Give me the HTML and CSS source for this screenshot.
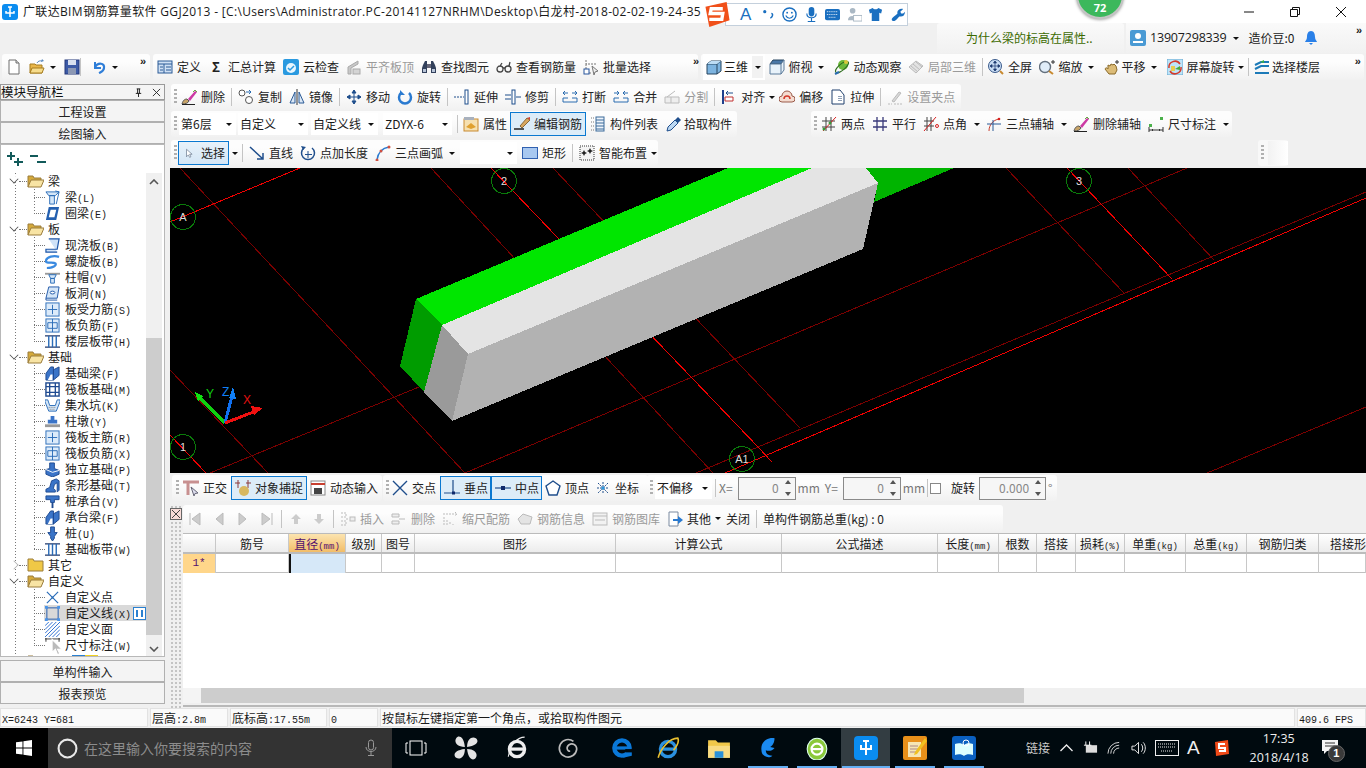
FILE: index.html
```html
<!DOCTYPE html>
<html lang="zh-CN">
<head>
<meta charset="utf-8">
<title>广联达BIM钢筋算量软件 GGJ2013</title>
<link rel="stylesheet" href="styles.css">
</head>
<body>
<svg class="defs" xmlns="http://www.w3.org/2000/svg">
<symbol id="new" viewBox="0 0 16 16"><path d="M3 1h7l3 3v11H3z" fill="#fff" stroke="#6f6f6f"/><path d="M10 1v3h3" fill="#ddd" stroke="#6f6f6f"/></symbol>
<symbol id="open" viewBox="0 0 16 16"><path d="M1 5h5l1 1h6v8H1z" fill="#e8b64a" stroke="#a67c20"/><path d="M3 9h12l-2 5H1z" fill="#f6dc8c" stroke="#a67c20"/><path d="M8 4c1-2 3-2.500 5-2" fill="none" stroke="#5a8ac0"/><path d="M13 0l2 2-3 1z" fill="#5a8ac0"/></symbol>
<symbol id="save" viewBox="0 0 16 16"><rect x="1" y="1" width="14" height="14" fill="#3c5aa6" stroke="#24387a"/><rect x="4" y="1" width="8" height="5" fill="#d8e0f0"/><rect x="4" y="9" width="8" height="6" fill="#8c98b4"/></symbol>
<symbol id="undo" viewBox="0 0 16 16"><path d="M4 3v6h6" fill="none" stroke="#2f7ed8" stroke-width="2"/><path d="M4 8c3-5 10-4 9 1 0 3-3 4-5 5" fill="none" stroke="#2f7ed8" stroke-width="2.200"/></symbol>
<symbol id="def" viewBox="0 0 16 16"><rect x="1" y="2" width="14" height="12" fill="#cfe0f4" stroke="#2a5a96"/><path d="M1 5h14M7 5v9M3 8h3M3 11h3M9 8h5M9 11h5" stroke="#2a5a96"/></symbol>
<symbol id="cloud" viewBox="0 0 16 16"><rect x="0" y="0" width="16" height="16" rx="2" fill="#2a9ae0"/><circle cx="8" cy="9" r="5" fill="#e8f6fe"/><path d="M5 9l2 2 4-4" fill="none" stroke="#2a9ae0" stroke-width="1.500"/></symbol>
<symbol id="flat" viewBox="0 0 16 16"><path d="M2 8l10-6v3L5 9v6H2z" fill="#c8c8c8" stroke="#aaa"/><rect x="7" y="10" width="7" height="5" fill="#d4d4d4" stroke="#aaa"/></symbol>
<symbol id="find" viewBox="0 0 16 16"><path d="M2 6l2-4h2v12H1V9zM14 6l-2-4h-2v12h5V9z" fill="#33415c"/><rect x="6" y="5" width="4" height="4" fill="#667"/><rect x="2" y="10" width="3" height="3" fill="#b8c4d8"/><rect x="11" y="10" width="3" height="3" fill="#b8c4d8"/></symbol>
<symbol id="glass" viewBox="0 0 16 16"><path d="M1 10a3 3 0 1 0 6 0 3 3 0 1 0-6 0M9 10a3 3 0 1 0 6 0 3 3 0 1 0-6 0M7 9h2M4 7l2-3M13 7l1-4" fill="none" stroke="#444" stroke-width="1.300"/></symbol>
<symbol id="batch" viewBox="0 0 16 16"><path d="M3 1v4h11M3 5v9h6" fill="none" stroke="#777" stroke-dasharray="2 1"/><rect x="1" y="10" width="5" height="5" fill="#fff" stroke="#27559c"/><path d="M9 7l6 5-3 1-1 3z" fill="#eee" stroke="#777"/></symbol>
<symbol id="cube" viewBox="0 0 16 16"><path d="M1 5l4-3h10v10l-4 3H1z" fill="#7db4e0" stroke="#27445f"/><path d="M1 5h10v10M11 5l4-3" fill="none" stroke="#27445f"/><path d="M1 5l4-3h10l-4 3z" fill="#bcdcf4"/></symbol>
<symbol id="top" viewBox="0 0 16 16"><path d="M1 5l3-4h11l-3 4z" fill="#4a78a8" stroke="#27445f"/><path d="M1 5h11v10H1zM12 5l3-4v10l-3 4" fill="#e8f2fa" stroke="#5a7a9a"/></symbol>
<symbol id="orbit" viewBox="0 0 16 16"><circle cx="9" cy="6" r="5" fill="#6cb83a"/><ellipse cx="8" cy="8" rx="8" ry="3" fill="none" stroke="#2d6d1e" transform="rotate(-40 8 8)"/><circle cx="12" cy="3" r="2" fill="#d8c838"/><path d="M1 15l4-2" stroke="#2a6cb0" stroke-width="2"/></symbol>
<symbol id="local" viewBox="0 0 16 16"><path d="M1 8l7-6 7 5-7 7z" fill="#e2e2e2" stroke="#bbb"/><path d="M5 5l7 6M8 3l6 5M3 7l7 6" stroke="#bbb"/></symbol>
<symbol id="full" viewBox="0 0 16 16"><circle cx="7" cy="7" r="6.500" fill="#c8dcf4" stroke="#3a5a8a"/><path d="M7 2v10M2 7h10M7 2L5.500 4h3zM7 12l-1.500-2h3zM2 7l2-1.500v3zM12 7l-2-1.500v3z" stroke="#1c3a70" fill="#1c3a70" stroke-width=".7"/><path d="M12 12l3 3" stroke="#c88a30" stroke-width="2"/></symbol>
<symbol id="zoom" viewBox="0 0 16 16"><circle cx="6" cy="8" r="5.500" fill="#e0ecf8" stroke="#64707e" stroke-width="1.400"/><path d="M10 12l4 3" stroke="#c88a30" stroke-width="2"/><path d="M12 3h4M14 1v4" stroke="#333"/></symbol>
<symbol id="pan" viewBox="0 0 16 16"><path d="M1 10c1-2 2-1 3 0V6l2 1 1-2 2 1 1-1 2 2 1 4-2 4H5z" fill="#dcbc78" stroke="#8a6a2a"/><path d="M11 3h4M13 1v4" stroke="#333"/></symbol>
<symbol id="rot" viewBox="0 0 16 16"><rect x="0" y="0" width="16" height="16" rx="1" fill="#bde4f8" stroke="#69a8d0"/><path d="M2 9a6 6 0 0 1 11-4M14 8a6 6 0 0 1-11 4" fill="none" stroke="#d43a2a" stroke-width="1.500"/><rect x="4" y="7" width="4" height="5" fill="#e8cc50"/><path d="M8 10l5-3v4z" fill="#4aa83a"/></symbol>
<symbol id="floor" viewBox="0 0 16 16"><path d="M1 6l6-3h8M1 10l6-3h8M1 14h14" fill="none" stroke="#1c7ab8" stroke-width="2"/><path d="M6 3l4-2v3z" fill="#3cae4a"/></symbol>
<symbol id="del" viewBox="0 0 16 16"><path d="M1 15c1-4 3-5 5-5l2 2c-1 2-3 3-7 3z" fill="#c8a468" stroke="#555"/><path d="M7 10l7-8 2 1-7 9z" fill="#cc3aa4"/><path d="M1 15.500h13" stroke="#222"/><path d="M12 3l2-2 2 2" fill="none" stroke="#6a4"/></symbol>
<symbol id="copy" viewBox="0 0 16 16"><circle cx="4" cy="4" r="3" fill="#fff" stroke="#555"/><circle cx="11" cy="11" r="3.500" fill="#fff" stroke="#555"/><path d="M8 3h5l-2-2M13 3l-2 2" fill="none" stroke="#2a6cb0"/></symbol>
<symbol id="mirror" viewBox="0 0 16 16"><path d="M8 0v16" stroke="#333"/><path d="M6 3v11H1zM10 3v11h5z" fill="#dbe8f6" stroke="#2a5a96"/></symbol>
<symbol id="move" viewBox="0 0 16 16"><path d="M8 1v14M1 8h14M8 1L6 4h4zM8 15l-2-3h4zM1 8l3-2v4zM15 8l-3-2v4z" stroke="#1f4e8c" fill="#1f4e8c"/></symbol>
<symbol id="rotate" viewBox="0 0 16 16"><path d="M4 4a6 6 0 1 0 8 0" fill="none" stroke="#2a7ad0" stroke-width="2.500"/><path d="M3 1v5h5z" fill="#2a7ad0"/></symbol>
<symbol id="extend" viewBox="0 0 16 16"><path d="M0 8h10" stroke="#1f4e8c" stroke-dasharray="2 1"/><rect x="11" y="1" width="3" height="14" fill="#fff" stroke="#1f4e8c"/></symbol>
<symbol id="trim" viewBox="0 0 16 16"><path d="M0 6h6M0 10h6M11 8h5" stroke="#1f4e8c"/><rect x="7" y="1" width="3" height="14" fill="#fff" stroke="#1f4e8c"/></symbol>
<symbol id="break" viewBox="0 0 16 16"><path d="M1 13V9h5M15 13V9h-5M1 13h14M2 4h4M14 4h-4M3 2L1 4l2 2M13 2l2 2-2 2" fill="none" stroke="#2a6cb0"/></symbol>
<symbol id="merge" viewBox="0 0 16 16"><path d="M1 13V9h5M15 13V9h-5M1 13h14M1 4h5M15 4h-5M4 2l2 2-2 2M12 2l-2 2 2 2" fill="none" stroke="#2a6cb0"/></symbol>
<symbol id="split" viewBox="0 0 16 16"><path d="M1 8h14v6H1zM7 8v6M3 8l8-6" fill="#eee" stroke="#bbb"/></symbol>
<symbol id="align" viewBox="0 0 16 16"><path d="M2 1v14" stroke="#1f3f8c" stroke-width="2"/><path d="M4 12h8V8H4z" fill="#fff" stroke="#c03030"/><path d="M12 4H5M7 2L5 4l2 2" fill="none" stroke="#1f4e8c"/></symbol>
<symbol id="offset" viewBox="0 0 16 16"><path d="M3 13a3 3 0 0 1 0-6 5 5 0 0 1 10 0 3 3 0 0 1 0 6z" fill="#f4dcd0" stroke="#9a5a4a"/><path d="M5 10a3 3 0 0 1 6 0" fill="none" stroke="#d43a2a" stroke-width="1.500"/></symbol>
<symbol id="stretch" viewBox="0 0 16 16"><path d="M2 1h8l4 5v9H2z" fill="#fff" stroke="#1f3f6c"/><path d="M9 7v6M11 7v6" stroke="#1f3f6c" stroke-dasharray="1 1"/></symbol>
<symbol id="grip" viewBox="0 0 16 16"><path d="M1 15h4M7 15h8" stroke="#bbb" stroke-dasharray="2 1"/><path d="M5 12l7-9 2 1-7 9z" fill="#d8d8d8" stroke="#bbb"/></symbol>
<symbol id="prop" viewBox="0 0 16 16"><rect x="1" y="3" width="14" height="12" fill="#f6e0b0" stroke="#c88a30"/><rect x="1" y="1" width="10" height="3" fill="#a8b0bc"/><path d="M3 11l5-4 5 4-5 2z" fill="#e0a030"/></symbol>
<symbol id="edit" viewBox="0 0 16 16"><path d="M0 13h10" stroke="#222" stroke-width="1.500"/><path d="M6 10l7-8 3 2-8 8z" fill="#d8a860" stroke="#8a6a3a"/><path d="M13 2l3 2 0-3z" fill="#d04030"/></symbol>
<symbol id="list" viewBox="0 0 16 16"><rect x="6" y="1" width="8" height="14" fill="#eef4fb" stroke="#3a6a9a"/><path d="M6 4h8M6 7h8M6 10h8M6 13h8" stroke="#3a6a9a"/><path d="M1 2h3M1 6h3M1 10h3M1 14h3" stroke="#777" stroke-dasharray="1 1"/></symbol>
<symbol id="pick" viewBox="0 0 16 16"><path d="M1 15l1-4 7-7 3 3-7 7z" fill="#bcd8f2" stroke="#1f4e8c"/><path d="M9 4l3-3 3 3-3 3z" fill="#1f4e8c"/></symbol>
<symbol id="two" viewBox="0 0 16 16"><path d="M1 5h13M1 11h13M5 1v14M10 1v14" stroke="#444"/><path d="M2 15L15 1" stroke="#d82020"/><circle cx="3" cy="13" r="1.500" fill="#3a9a3a"/><circle cx="9" cy="7" r="1.500" fill="#3a9a3a"/></symbol>
<symbol id="para" viewBox="0 0 16 16"><path d="M1 5h14M1 11h14M5 1v14M11 1v14" stroke="#3a3a7a" stroke-width="1.300"/></symbol>
<symbol id="ang" viewBox="0 0 16 16"><path d="M1 5h10M1 10h10M4 1v14M8 1v14" stroke="#444"/><path d="M1 15L13 1" stroke="#d82020"/><circle cx="14" cy="10" r="1.500" fill="none" stroke="#d82020"/></symbol>
<symbol id="arc3" viewBox="0 0 16 16"><path d="M3 15c0-6 4-11 10-12" fill="none" stroke="#c84030"/><path d="M1 8h14M7 4v11" stroke="#2a5a96"/><circle cx="13" cy="3" r="1.300" fill="#d82020"/></symbol>
<symbol id="dim" viewBox="0 0 16 16"><path d="M1 14h14M1 11v5M15 11v5M5 13l-1 1 1 1M11 13l1 1-1 1" fill="none" stroke="#333"/><rect x="1" y="8" width="3" height="3" fill="#4ab04a"/><rect x="12" y="1" width="3" height="3" fill="#4ab04a"/></symbol>
<symbol id="arrow" viewBox="0 0 16 16"><path d="M4 2v12l3-3 2 4 2-1-2-4h4z" fill="#fff" stroke="#5a6a80"/></symbol>
<symbol id="lineic" viewBox="0 0 16 16"><path d="M1 2l13 12M14 8v6H8" fill="none" stroke="#1f4e8c" stroke-width="1.500"/></symbol>
<symbol id="ptlen" viewBox="0 0 16 16"><path d="M4 3a6.500 6.500 0 1 0 8 0" fill="none" stroke="#1f4e8c" stroke-width="1.500"/><path d="M1 1l5 1-3 3z" fill="#1f4e8c"/><path d="M8 6v7M5 9.500h7" stroke="#1f4e8c"/></symbol>
<symbol id="arc" viewBox="0 0 16 16"><path d="M2 15C3 8 7 3 14 2" fill="none" stroke="#2a7ad0" stroke-width="1.500"/><circle cx="2" cy="15" r="1.500" fill="#d05040"/><circle cx="6" cy="6" r="1.500" fill="#d05040"/><circle cx="14" cy="2" r="1.500" fill="#d05040"/></symbol>
<symbol id="rect" viewBox="0 0 16 16"><rect x="0.500" y="2.500" width="15" height="11" fill="#a8c8f0" stroke="#3060b0"/></symbol>
<symbol id="smart" viewBox="0 0 16 16"><rect x="1" y="1" width="14" height="14" fill="#f4f4f4" stroke="#333" stroke-dasharray="1 1"/><path d="M5 5l1 2 2 1-2 1-1 2-1-2-2-1 2-1zM11 3l1 2 2 1-2 1-1 2-1-2-2-1 2-1z" fill="#222"/></symbol>
<symbol id="ortho" viewBox="0 0 16 16"><path d="M0 2h16M5 2v13" stroke="#c89090" stroke-width="3"/><path d="M8 7l7 6-3 .5-1 2.500z" fill="#dde" stroke="#667"/></symbol>
<symbol id="snap" viewBox="0 0 16 16"><path d="M3 0v8M13 0v8M0 3h5M11 3h5" stroke="#8a3a3a"/><circle cx="9" cy="11" r="5" fill="#d8b860"/></symbol>
<symbol id="dyn" viewBox="0 0 16 16"><rect x="1" y="1" width="14" height="14" fill="#fff" stroke="#888"/><path d="M1 4h14" stroke="#c84030" stroke-width="2"/><rect x="4" y="8" width="8" height="6" fill="#444"/></symbol>
<symbol id="cross" viewBox="0 0 16 16"><path d="M1 1l14 14M15 1L1 15" stroke="#1f4e8c" stroke-width="1.400"/></symbol>
<symbol id="perp" viewBox="0 0 16 16"><path d="M9 0v13M0 13h16" stroke="#1f4e8c" stroke-width="1.200"/><rect x="8" y="11.500" width="3" height="3" fill="#102a6c"/></symbol>
<symbol id="mid" viewBox="0 0 16 16"><path d="M0 8h16" stroke="#1f4e8c" stroke-width="1.200"/><rect x="6" y="6" width="4" height="4" fill="#102a6c"/></symbol>
<symbol id="vert" viewBox="0 0 16 16"><path d="M8 1l7 5-3 9H4L1 6z" fill="#fff" stroke="#1f4e8c" stroke-width="1.400"/></symbol>
<symbol id="coord" viewBox="0 0 16 16"><path d="M3 3l10 10M13 3L3 13M2 8h12M8 2v12" stroke="#1f4e8c" stroke-dasharray="2 1"/><circle cx="8" cy="8" r="1.500" fill="#2a9ae0"/></symbol>
<symbol id="first" viewBox="0 0 16 16"><path d="M3 2v12M13 2L5 8l8 6z" fill="#ccc" stroke="#bbb"/></symbol>
<symbol id="prev" viewBox="0 0 16 16"><path d="M12 2L5 8l7 6z" fill="#ccc" stroke="#bbb"/></symbol>
<symbol id="next" viewBox="0 0 16 16"><path d="M4 2l7 6-7 6z" fill="#ccc" stroke="#bbb"/></symbol>
<symbol id="last" viewBox="0 0 16 16"><path d="M13 2v12M3 2l8 6-8 6z" fill="#ccc" stroke="#bbb"/></symbol>
<symbol id="up" viewBox="0 0 16 16"><path d="M8 3l5 5h-3v5H6V8H3z" fill="#ccc"/></symbol>
<symbol id="down" viewBox="0 0 16 16"><path d="M8 13l5-5h-3V3H6v5H3z" fill="#ccc"/></symbol>
<symbol id="ins" viewBox="0 0 16 16"><path d="M1 2h5v4H1M1 10h5v4H1M6 8h3" fill="none" stroke="#bbb" stroke-dasharray="2 1"/><rect x="10" y="6" width="5" height="4" fill="#eee" stroke="#bbb"/></symbol>
<symbol id="rem" viewBox="0 0 16 16"><path d="M1 3h7v3H1zM1 10h7v3H1zM8 8h6" fill="#eee" stroke="#bbb"/></symbol>
<symbol id="scale" viewBox="0 0 16 16"><path d="M1 3h13M13 1l2 2-2 2M2 6v8M5 9v5M8 11v3M11 13v1" fill="none" stroke="#bbb" stroke-dasharray="2 1"/></symbol>
<symbol id="info" viewBox="0 0 16 16"><path d="M1 8l5-5 9 3-2 7H4z" fill="#e4e4e4" stroke="#bbb"/></symbol>
<symbol id="lib" viewBox="0 0 16 16"><rect x="1" y="2" width="14" height="12" fill="#f2f2f2" stroke="#bbb"/><path d="M1 5h14M3 9h10" stroke="#bbb"/></symbol>
<symbol id="other" viewBox="0 0 16 16"><path d="M2 1h9v14H2z" fill="#fff" stroke="#7a8aa0"/><path d="M6 8h5V5l5 4-5 4v-3H6z" fill="#2a7ad0"/></symbol>
<symbol id="t-beam" viewBox="0 0 16 16"><path d="M1 2h14l-4 4H4zM5 6h5v9H5z" fill="#d4e6f8" stroke="#2a6cb8"/><path d="M11 1l4 1-3 13" fill="none" stroke="#2a6cb8"/></symbol>
<symbol id="t-ring" viewBox="0 0 16 16"><path d="M4 1h11l-3 14H1z" fill="#2460b0"/><path d="M6 4h6l-2 8H4z" fill="#fff"/></symbol>
<symbol id="t-slab" viewBox="0 0 16 16"><path d="M4 1h11l-2 11H1v3h12" fill="#cfe2f8" stroke="#1e56a8" stroke-width="1.300"/></symbol>
<symbol id="t-spiral" viewBox="0 0 16 16"><path d="M15 3C9 1 2 3 1 7s8 1 10 3-3 5-9 5" fill="none" stroke="#3a8ae0" stroke-width="2.400"/></symbol>
<symbol id="t-cap" viewBox="0 0 16 16"><path d="M0 3h16v2H0z" fill="#999"/><path d="M4 5h8l-2 4H6zM6 9h4v5H6z" fill="#d4e6f8" stroke="#2a6cb8"/></symbol>
<symbol id="t-hole" viewBox="0 0 16 16"><path d="M4 1h11l-2 12H1z" fill="#d4e6f8" stroke="#1e56a8"/><ellipse cx="8" cy="7" rx="2.500" ry="1.500" fill="#fff" stroke="#1e56a8"/><path d="M1 13v2h12" fill="none" stroke="#1e56a8"/></symbol>
<symbol id="t-rebar" viewBox="0 0 16 16"><rect x="1" y="1" width="14" height="14" fill="#dcebfa" stroke="#2a6cb8"/><path d="M8 3v10M3 8h10" stroke="#2a6cb8"/></symbol>
<symbol id="t-neg" viewBox="0 0 16 16"><rect x="1" y="1" width="14" height="14" fill="#dcebfa" stroke="#2a6cb8"/><path d="M8 1v14M3 5h10v6H3z" fill="none" stroke="#2a6cb8"/></symbol>
<symbol id="t-band" viewBox="0 0 16 16"><path d="M0 2h16M0 14h16" stroke="#223a6c" stroke-width="1.500"/><path d="M4 2v12M8 2v12M12 2v12" stroke="#2a6cb8" stroke-width="1.500"/></symbol>
<symbol id="t-fb" viewBox="0 0 16 16"><path d="M1 15V8l5-7h3v14zM9 4l6-3v9l-6 5z" fill="#3a74c8" stroke="#1e4a90"/><path d="M3 15l3-6h2v6" fill="#fff"/></symbol>
<symbol id="t-raft" viewBox="0 0 16 16"><rect x="1" y="1" width="14" height="14" fill="#fff" stroke="#1e4a90" stroke-width="1.500"/><path d="M1 5h14M1 11h14M5 1v14M11 1v14" stroke="#1e4a90" stroke-width="1.400"/></symbol>
<symbol id="t-sump" viewBox="0 0 16 16"><path d="M0 2h3l2 6h6l2-6h3v2l-4 10H4L0 4z" fill="#d4e6f8" stroke="#2a6cb8"/><path d="M4 10h8M5 12h6" stroke="#777" stroke-dasharray="1 1"/></symbol>
<symbol id="t-pier" viewBox="0 0 16 16"><path d="M6 2h4v4H6zM3 6h10v4H3z" fill="#3a74c8"/><rect x="0" y="11" width="16" height="3" fill="#999"/></symbol>
<symbol id="t-iso" viewBox="0 0 16 16"><path d="M5 1h5v6l5 2v4l-7 3-7-3V8l4-1z" fill="#3a74c8" stroke="#1e4a90"/><path d="M1 8l7 3 7-2" fill="none" stroke="#fff"/></symbol>
<symbol id="t-strip" viewBox="0 0 16 16"><path d="M1 15v-3l4-2 2-7 5-2 3 2v10l-2 2V5l-3 2-1 4 2 2v2z" fill="#3a74c8" stroke="#1e4a90"/></symbol>
<symbol id="t-pcap" viewBox="0 0 16 16"><path d="M1 2h14v4H10v3H6V6H1z" fill="#3a74c8" stroke="#1e4a90"/><path d="M7 9h2v6H7z" fill="#1e4a90"/></symbol>
<symbol id="t-pile" viewBox="0 0 16 16"><path d="M6 1h4v6h3l-3 4v2l-2 3-2-3v-2L3 7h3z" fill="#3a74c8" stroke="#1e4a90"/></symbol>
<symbol id="t-fx" viewBox="0 0 16 16"><path d="M2 2l12 12M14 2L2 14" stroke="#2a6cb8" stroke-width="1.300"/><circle cx="8" cy="8" r="1" fill="#2a6cb8"/></symbol>
<symbol id="t-line" viewBox="0 0 16 16"><rect x="2" y="2" width="12" height="12" fill="none" stroke="#1e56a8"/><path d="M0 0h3v3H0zM13 0h3v3h-3zM0 13h3v3H0zM13 13h3v3h-3z" fill="#4a94e8"/></symbol>
<symbol id="t-face" viewBox="0 0 16 16"><path d="M0 4l4-4M0 8l8-8M0 12L12 0M0 16L16 0M4 16L16 4M8 16l8-8M12 16l4-4" stroke="#2a6cd0"/></symbol>
<symbol id="t-dim" viewBox="0 0 16 16"><path d="M0 1h16M1 0v4M15 0v4" stroke="#333"/></symbol>
<symbol id="f-open" viewBox="0 0 17 14"><path d="M1 13V2h5l1 2h7v2" fill="#d4a93a" stroke="#9a7c3c"/><path d="M1 13l3-7h13l-3 7z" fill="#f8e4a4" stroke="#9a7c3c"/></symbol>
<symbol id="f-closed" viewBox="0 0 17 14"><path d="M1 13V1h5l1 2h9v10z" fill="#f0c846" stroke="#9a7c3c"/></symbol>
</svg>

<div class="app">
  <header class="titlebar">
    <svg class="appico" viewBox="0 0 16 16"><rect width="16" height="16" rx="3" fill="#0a8cf0"/><path d="M8 3v10M4 7v2h8V7M6 3h4" fill="none" stroke="#fff" stroke-width="1.500"/></svg>
    <div class="title">广联达BIM钢筋算量软件 GGJ2013 - [C:\Users\Administrator.PC-20141127NRHM\Desktop\白龙村-2018-02-02-19-24-35</div>
    <div class="winctl">
      <svg viewBox="0 0 12 12"><path d="M1 6h10" stroke="#111"/></svg>
      <svg viewBox="0 0 12 12"><path d="M1.500 3.500h7v7h-7zM3.500 3.500v-2h7v7h-2" fill="none" stroke="#111"/></svg>
      <svg viewBox="0 0 12 12"><path d="M1 1l10 10M11 1L1 11" stroke="#111"/></svg>
    </div>
  </header>

  <div class="infobar">
    <div class="askbox">为什么梁的标高在属性..</div>
    <div class="userbox">
      <svg class="i" viewBox="0 0 16 16"><rect width="16" height="16" rx="2" fill="#4a9ad4"/><circle cx="8" cy="6" r="3" fill="#fff"/><path d="M3 13h10v-2H3z" fill="#fff"/></svg>
      <span class="phone">13907298339</span><span class="caret c-phone"></span><span>造价豆:0</span>
      <svg class="i bell" viewBox="0 0 16 16"><path d="M8 1c3 0 4 3 4 6 0 3 2 4 2 5H2c0-1 2-2 2-5 0-3 1-6 4-6z" fill="#2a80e8"/><path d="M6 13h4l-2 2z" fill="#2a80e8"/></svg>
      <span class="more">»</span>
    </div>
  </div>

  <div class="row row-main">
    <div class="bar b-file">
      <svg class="i"><use href="#new"/></svg><svg class="i"><use href="#open"/></svg><span class="caret"></span><svg class="i"><use href="#save"/></svg><span class="sep"></span><svg class="i"><use href="#undo"/></svg><span class="caret"></span><span class="more">»</span>
    </div>
    <div class="bar b-cmd">
      <span class="t"><svg class="i"><use href="#def"/></svg>定义</span>
      <span class="t"><span class="i sigma">Σ</span>汇总计算</span>
      <span class="t"><svg class="i"><use href="#cloud"/></svg>云检查</span>
      <span class="t off"><svg class="i"><use href="#flat"/></svg>平齐板顶</span>
      <span class="t"><svg class="i"><use href="#find"/></svg>查找图元</span>
      <span class="t"><svg class="i"><use href="#glass"/></svg>查看钢筋量</span>
      <span class="t"><svg class="i"><use href="#batch"/></svg>批量选择</span>
      <span class="more">»</span>
    </div>
    <div class="bar b-view">
      <span class="combo3d"><svg class="i"><use href="#cube"/></svg><span class="tx3d">三维</span><span class="cbtn"><span class="caret"></span></span></span>
      <span class="t"><svg class="i"><use href="#top"/></svg>俯视</span><span class="caret cw"></span>
      <span class="t"><svg class="i"><use href="#orbit"/></svg>动态观察</span>
      <span class="t off"><svg class="i"><use href="#local"/></svg>局部三维</span>
      <span class="sep"></span>
      <span class="t"><svg class="i"><use href="#full"/></svg>全屏</span>
      <span class="t"><svg class="i"><use href="#zoom"/></svg>缩放</span><span class="caret cw"></span>
      <span class="t tight"><svg class="i"><use href="#pan"/></svg>平移</span><span class="caret cw"></span>
      <span class="t"><svg class="i"><use href="#rot"/></svg>屏幕旋转</span><span class="caret cn"></span>
      <span class="sep"></span>
      <span class="t tight"><svg class="i"><use href="#floor"/></svg>选择楼层</span>
      <span class="more">»</span>
    </div>
  </div>

  <main class="body">
    <aside class="left">
      <div class="navhead"><span>模块导航栏</span><span class="navctl"><svg viewBox="0 0 10 10"><path d="M3 1h4M4 1v5M6 1v5M2 6h6M5 6v4" stroke="#111" fill="none"/></svg><svg viewBox="0 0 10 10"><path d="M1 1l8 8M9 1L1 9" stroke="#222"/></svg></span></div>
      <button class="navbtn">工程设置</button>
      <button class="navbtn">绘图输入</button>
      <div class="treepanel">
        <div class="treetools">
          <svg viewBox="0 0 16 14"><path d="M4 0v8M0 4h8M11 6v8M7 10h9" stroke="#125a5a" stroke-width="2"/></svg>
          <svg viewBox="0 0 16 14"><path d="M0 4h8M7 10h9" stroke="#125a5a" stroke-width="2"/></svg>
        </div>
        <div class="treewrap">
          <div class="tree">
            <div class="fold"><span class="chev"></span><span class="dash"></span><svg class="fi"><use href="#f-open"/></svg><span>梁</span></div>
            <div class="kids">
              <div class="leaf"><span class="d2"></span><svg class="ti"><use href="#t-beam"/></svg><span>梁<i>(L)</i></span></div>
              <div class="leaf"><span class="d2"></span><svg class="ti"><use href="#t-ring"/></svg><span>圈梁<i>(E)</i></span></div>
            </div>
            <div class="fold"><span class="chev"></span><span class="dash"></span><svg class="fi"><use href="#f-open"/></svg><span>板</span></div>
            <div class="kids">
              <div class="leaf"><span class="d2"></span><svg class="ti"><use href="#t-slab"/></svg><span>现浇板<i>(B)</i></span></div>
              <div class="leaf"><span class="d2"></span><svg class="ti"><use href="#t-spiral"/></svg><span>螺旋板<i>(B)</i></span></div>
              <div class="leaf"><span class="d2"></span><svg class="ti"><use href="#t-cap"/></svg><span>柱帽<i>(V)</i></span></div>
              <div class="leaf"><span class="d2"></span><svg class="ti"><use href="#t-hole"/></svg><span>板洞<i>(N)</i></span></div>
              <div class="leaf"><span class="d2"></span><svg class="ti"><use href="#t-rebar"/></svg><span>板受力筋<i>(S)</i></span></div>
              <div class="leaf"><span class="d2"></span><svg class="ti"><use href="#t-neg"/></svg><span>板负筋<i>(F)</i></span></div>
              <div class="leaf"><span class="d2"></span><svg class="ti"><use href="#t-band"/></svg><span>楼层板带<i>(H)</i></span></div>
            </div>
            <div class="fold"><span class="chev"></span><span class="dash"></span><svg class="fi"><use href="#f-open"/></svg><span>基础</span></div>
            <div class="kids">
              <div class="leaf"><span class="d2"></span><svg class="ti"><use href="#t-fb"/></svg><span>基础梁<i>(F)</i></span></div>
              <div class="leaf"><span class="d2"></span><svg class="ti"><use href="#t-raft"/></svg><span>筏板基础<i>(M)</i></span></div>
              <div class="leaf"><span class="d2"></span><svg class="ti"><use href="#t-sump"/></svg><span>集水坑<i>(K)</i></span></div>
              <div class="leaf"><span class="d2"></span><svg class="ti"><use href="#t-pier"/></svg><span>柱墩<i>(Y)</i></span></div>
              <div class="leaf"><span class="d2"></span><svg class="ti"><use href="#t-rebar"/></svg><span>筏板主筋<i>(R)</i></span></div>
              <div class="leaf"><span class="d2"></span><svg class="ti"><use href="#t-neg"/></svg><span>筏板负筋<i>(X)</i></span></div>
              <div class="leaf"><span class="d2"></span><svg class="ti"><use href="#t-iso"/></svg><span>独立基础<i>(P)</i></span></div>
              <div class="leaf"><span class="d2"></span><svg class="ti"><use href="#t-strip"/></svg><span>条形基础<i>(T)</i></span></div>
              <div class="leaf"><span class="d2"></span><svg class="ti"><use href="#t-pcap"/></svg><span>桩承台<i>(V)</i></span></div>
              <div class="leaf"><span class="d2"></span><svg class="ti"><use href="#t-fb"/></svg><span>承台梁<i>(F)</i></span></div>
              <div class="leaf"><span class="d2"></span><svg class="ti"><use href="#t-pile"/></svg><span>桩<i>(U)</i></span></div>
              <div class="leaf"><span class="d2"></span><svg class="ti"><use href="#t-band"/></svg><span>基础板带<i>(W)</i></span></div>
            </div>
            <div class="fold"><span class="chev shut"></span><span class="dash"></span><svg class="fi"><use href="#f-closed"/></svg><span>其它</span></div>
            <div class="fold"><span class="chev"></span><span class="dash"></span><svg class="fi"><use href="#f-open"/></svg><span>自定义</span></div>
            <div class="kids">
              <div class="leaf"><span class="d2"></span><svg class="ti"><use href="#t-fx"/></svg><span>自定义点</span></div>
              <div class="leaf cur"><span class="d2"></span><svg class="ti"><use href="#t-line"/></svg><span>自定义线<i>(X)</i></span><svg class="hint" viewBox="0 0 13 13"><rect x=".5" y=".5" width="12" height="12" fill="#fff" stroke="#2a80d0"/><path d="M3 3v7h2V3zM8 3v7h2V3z" fill="#2a80d0"/></svg></div>
              <div class="leaf"><span class="d2"></span><svg class="ti"><use href="#t-face"/></svg><span>自定义面</span></div>
              <div class="leaf"><span class="d2"></span><svg class="ti"><use href="#t-dim"/></svg><span>尺寸标注<i>(W)</i></span></div>
            </div>
            <div class="fold clipped"><span class="chev"></span><span class="dash"></span><svg class="fi"><use href="#f-open"/></svg><svg class="hint2" viewBox="0 0 13 13"><rect x=".5" y=".5" width="12" height="12" fill="#fff" stroke="#2a80d0"/></svg><svg class="hint2" viewBox="0 0 13 13"><rect width="13" height="13" fill="#f0d020"/></svg></div>
          </div>
          <svg class="cursor" viewBox="0 0 11 16"><path d="M1 1v12l3-3 2 5 2-1-2-4h4z" fill="#bbb" stroke="#fff"/></svg>
          <div class="vscroll">
            <svg class="va" viewBox="0 0 10 6"><path d="M1 5l4-4 4 4" fill="none" stroke="#555" stroke-width="1.600"/></svg>
            <span class="vthumb"></span>
            <svg class="vb" viewBox="0 0 10 6"><path d="M1 1l4 4 4-4" fill="none" stroke="#555" stroke-width="1.600"/></svg>
          </div>
        </div>
      </div>
      <button class="navbtn b1">单构件输入</button>
      <button class="navbtn">报表预览</button>
    </aside>

    <section class="right">
      <div class="row r1">
        <div class="bar b-edit">
          <span class="dots"></span>
          <span class="t"><svg class="i"><use href="#del"/></svg>删除</span><span class="sep"></span>
          <span class="t"><svg class="i"><use href="#copy"/></svg>复制</span>
          <span class="t"><svg class="i"><use href="#mirror"/></svg>镜像</span><span class="sep"></span>
          <span class="t"><svg class="i"><use href="#move"/></svg>移动</span>
          <span class="t"><svg class="i"><use href="#rotate"/></svg>旋转</span><span class="sep"></span>
          <span class="t"><svg class="i"><use href="#extend"/></svg>延伸</span>
          <span class="t"><svg class="i"><use href="#trim"/></svg>修剪</span><span class="sep"></span>
          <span class="t"><svg class="i"><use href="#break"/></svg>打断</span>
          <span class="t"><svg class="i"><use href="#merge"/></svg>合并</span>
          <span class="t off"><svg class="i"><use href="#split"/></svg>分割</span><span class="sep"></span>
          <span class="t"><svg class="i"><use href="#align"/></svg>对齐</span><span class="caret cn"></span>
          <span class="t pull"><svg class="i"><use href="#offset"/></svg>偏移</span>
          <span class="t"><svg class="i"><use href="#stretch"/></svg>拉伸</span><span class="sep"></span>
          <span class="t off"><svg class="i"><use href="#grip"/></svg>设置夹点</span>
        </div>
      </div>
      <div class="row r2">
        <div class="bar b-sel">
          <span class="dots"></span>
          <span class="combo w57">第6层<span class="caret"></span></span>
          <span class="combo w70">自定义<span class="caret"></span></span>
          <span class="combo w67">自定义线<span class="caret"></span></span>
          <span class="combo w69">ZDYX-6<span class="caret"></span></span>
          <span class="sep"></span>
          <span class="t"><svg class="i"><use href="#prop"/></svg>属性</span>
          <span class="t on"><svg class="i"><use href="#edit"/></svg>编辑钢筋</span>
          <span class="t"><svg class="i"><use href="#list"/></svg>构件列表</span>
          <span class="t tight pick"><svg class="i"><use href="#pick"/></svg>拾取构件</span>
        </div>
        <div class="bar b-axis">
          <span class="dots"></span>
          <span class="t"><svg class="i"><use href="#two"/></svg>两点</span>
          <span class="t"><svg class="i"><use href="#para"/></svg>平行</span>
          <span class="t"><svg class="i"><use href="#ang"/></svg>点角</span><span class="caret cw"></span>
          <span class="t"><svg class="i"><use href="#arc3"/></svg>三点辅轴</span><span class="caret cw"></span>
          <span class="t"><svg class="i"><use href="#del"/></svg>删除辅轴</span>
          <span class="t"><svg class="i"><use href="#dim"/></svg>尺寸标注</span><span class="caret cw"></span>
        </div>
      </div>
      <div class="row r3">
        <div class="bar b-draw">
          <span class="dots"></span>
          <span class="t on sel"><svg class="i sm"><use href="#arrow"/></svg>选择</span><span class="caret cs"></span><span class="sep"></span>
          <span class="t"><svg class="i"><use href="#lineic"/></svg>直线</span>
          <span class="t"><svg class="i"><use href="#ptlen"/></svg>点加长度</span>
          <span class="t"><svg class="i"><use href="#arc"/></svg>三点画弧</span><span class="caret cw"></span>
          <span class="combo w57 blank"><span class="caret"></span></span>
          <span class="t"><svg class="i"><use href="#rect"/></svg>矩形</span><span class="sep"></span>
          <span class="t"><svg class="i"><use href="#smart"/></svg>智能布置</span><span class="caret cn"></span>
        </div>
        <div class="bar b-stub"><span class="dots"></span><span class="stubbox"></span></div>
      </div>

      <div class="canvas">
        <svg class="scene" viewBox="170 168 1196 305" xmlns="http://www.w3.org/2000/svg">
          <g fill="none" stroke="#7a0000" stroke-width="1">
            <path d="M180 168L465 473M431 168L713 473M553 168L800 428M170 370L268 473M419 387L210 473M465 473L1187 168M1006 168L1124 293M1128 168L1214 260M1207 473L1366 407M696 473L1366 192"/>
          </g>
          <g fill="none" stroke="#f00000" stroke-width="1">
            <path d="M300 168L170 222M491 168L759 448L772 462M170 435L206 473M1067 168L1172 279M725 473L1366 198"/>
          </g>
          <g fill="none" stroke="#0a7a0a">
            <circle cx="183" cy="217" r="12.500"/><circle cx="504" cy="181" r="12.500"/><circle cx="1079" cy="181" r="12.500"/><circle cx="183" cy="447" r="12.500"/><circle cx="742" cy="459" r="12.500"/>
          </g>
          <g class="axislabel" fill="#ddd" text-anchor="middle">
            <text x="183" y="221">A</text><text x="504" y="185">2</text><text x="1079" y="185">3</text><text x="183" y="451">1</text><text x="742" y="463">A1</text>
          </g>
          <polygon points="416,299 728,168 812,168 442,325" fill="#00e600"/>
          <polygon points="866,168 954,168 874,202 878,183" fill="#00b400"/>
          <polygon points="416,299 442,325 424,392 400,366" fill="#009c00"/>
          <polygon points="442,325 812,168 866,168 878,183 468,354" fill="#e4e4e4"/>
          <polygon points="468,354 878,183 863,249 452,421" fill="#b2b2b2"/>
          <polygon points="442,325 468,354 452,421 424,392" fill="#9a9a9a"/>
          <path d="M225 423L198 396" stroke="#10d010" stroke-width="3"/><polygon points="195,392 203,396 198,401" fill="#10e010"/>
          <path d="M225 423L232 396" stroke="#1070f0" stroke-width="3"/><polygon points="233,387 236,399 229,398" fill="#1080f8"/>
          <path d="M225 423L256 411" stroke="#f01010" stroke-width="3"/><polygon points="263,408 254,415 251,406" fill="#f01010"/>
          <g class="triad"><text x="206" y="398" fill="#10d010">Y</text><text x="222" y="396" fill="#1080f8">Z</text><text x="243" y="404" fill="#e01010">X</text></g>
        </svg>
      </div>

      <div class="row r4">
        <div class="bar b-snap">
          <span class="dots"></span>
          <span class="t"><svg class="i"><use href="#ortho"/></svg>正交</span>
          <span class="t on"><svg class="i"><use href="#snap"/></svg>对象捕捉</span>
          <span class="t dynt"><svg class="i"><use href="#dyn"/></svg>动态输入</span>
        </div>
        <div class="bar b-pts">
          <span class="dots"></span>
          <span class="t first"><svg class="i"><use href="#cross"/></svg>交点</span>
          <span class="pair"><span class="t on"><svg class="i"><use href="#perp"/></svg>垂点</span><span class="t on"><svg class="i"><use href="#mid"/></svg>中点</span></span>
          <span class="t vt"><svg class="i"><use href="#vert"/></svg>顶点</span>
          <span class="t ct"><svg class="i"><use href="#coord"/></svg>坐标</span>
        </div>
        <div class="bar b-off">
          <span class="dots"></span>
          <span class="combo w57">不偏移<span class="caret"></span></span>
          <span class="sep"></span>
          <span class="lab x">X=</span><span class="spin w58"><span class="v">0</span><span class="arrows"></span></span><span class="lab">mm</span>
          <span class="lab y">Y=</span><span class="spin w58"><span class="v">0</span><span class="arrows"></span></span><span class="lab">mm</span>
          <span class="sep s-chk"></span>
          <span class="chk"></span><span class="rotlab">旋转</span>
          <span class="spin w67"><span class="v">0.000</span><span class="arrows"></span></span><span class="lab">°</span>
        </div>
      </div>

      <div class="lower">
        <div class="strip"><svg viewBox="0 0 12 12"><rect x=".5" y=".5" width="11" height="11" fill="#f8dcd8" stroke="#666"/><path d="M2 2l8 8M10 2l-8 8" stroke="#444"/></svg></div>
        <div class="gridcol">
          <div class="row r5">
            <div class="bar b-rows">
              <svg class="i n1"><use href="#first"/></svg><svg class="i n2"><use href="#prev"/></svg><svg class="i n2"><use href="#next"/></svg><svg class="i n2"><use href="#last"/></svg><span class="sep"></span>
              <svg class="i"><use href="#up"/></svg><svg class="i"><use href="#down"/></svg><span class="sep"></span>
              <span class="t off"><svg class="i"><use href="#ins"/></svg>插入</span>
              <span class="t off"><svg class="i"><use href="#rem"/></svg>删除</span>
              <span class="t off"><svg class="i"><use href="#scale"/></svg>缩尺配筋</span>
              <span class="t off"><svg class="i"><use href="#info"/></svg>钢筋信息</span>
              <span class="t off"><svg class="i"><use href="#lib"/></svg>钢筋图库</span>
              <span class="t"><svg class="i"><use href="#other"/></svg>其他</span><span class="caret cn"></span>
              <span class="t close">关闭</span><span class="sep"></span>
              <span class="t weight">单构件钢筋总重(kg) : 0</span>
            </div>
          </div>
          <div class="grid">
            <div class="g-row g-head">
              <div></div><div>筋号</div><div class="act">直径<i>(mm)</i></div><div>级别</div><div>图号</div><div>图形</div><div>计算公式</div><div>公式描述</div><div>长度<i>(mm)</i></div><div>根数</div><div>搭接</div><div>损耗<i>(%)</i></div><div>单重<i>(kg)</i></div><div>总重<i>(kg)</i></div><div>钢筋归类</div><div class="cut">搭接形</div>
            </div>
            <div class="g-row g-body">
              <div class="rh">1*</div><div></div><div class="cell"></div><div></div><div></div><div></div><div></div><div></div><div></div><div></div><div></div><div></div><div></div><div></div><div></div><div></div>
            </div>
          </div>
          <div class="hscroll"><span class="hbox"></span><span class="hthumb"></span></div>
        </div>
      </div>
    </section>
  </main>

  <footer class="status">
    <div class="st s1"><i>X=6243 Y=681</i></div>
    <div class="st s2">层高<i>:2.8m</i></div>
    <div class="st s3">底标高<i>:17.55m</i></div>
    <div class="st s4"><i>0</i></div>
    <div class="st s5">按鼠标左键指定第一个角点，或拾取构件图元</div>
    <div class="st s6"><i>409.6 FPS</i></div>
  </footer>

  <nav class="taskbar">
    <div class="start"><svg viewBox="0 0 16 16"><path d="M0 2.300L6.500 1.400V7.500H0zM7.400 1.300L16 0V7.500H7.400zM0 8.500H6.500V14.600L0 13.700zM7.400 8.500H16V16L7.400 14.700z" fill="#fff"/></svg></div>
    <div class="search">
      <svg class="cortana" viewBox="0 0 20 20"><circle cx="10" cy="10" r="8.500" fill="none" stroke="#e8e8e8" stroke-width="2"/></svg>
      <span class="ph">在这里输入你要搜索的内容</span>
      <svg class="mic" viewBox="0 0 12 18"><rect x="3.500" y="1" width="5" height="10" rx="2.500" fill="none" stroke="#999"/><path d="M1 8c0 6 10 6 10 0M6 13v3M3 16.500h6" fill="none" stroke="#999"/></svg>
    </div>
    <svg class="tv" viewBox="0 0 22 16"><rect x="5" y="1" width="12" height="14" fill="none" stroke="#fff"/><path d="M3 3H1v10h2M19 3h2v10h-2" fill="none" stroke="#fff"/></svg>
    <div class="apps">
      <span class="app-i"><svg viewBox="0 0 22 22"><path d="M10 10C2 10 0 5 2 2s7-2 8 8zM12 10c0-8 5-10 8-8s2 7-8 8zM12 12c8 0 10 5 8 8s-7 2-8-8zM10 12c0 8-5 10-8 8s-2-7 8-8z" fill="#e4e4e4"/></svg></span>
      <span class="app-i"><svg viewBox="0 0 22 22"><circle cx="11" cy="12" r="7" fill="none" stroke="#eee" stroke-width="3"/><path d="M4 12h14" stroke="#eee" stroke-width="3"/><path d="M18 1c-6 0-13 6-15 18" fill="none" stroke="#eee"/></svg></span>
      <span class="app-i"><svg viewBox="0 0 22 22"><path d="M16 5a8 8 0 1 0 3 7c0-4-4-6-7-4s-2 6 1 6" fill="none" stroke="#bbb" stroke-width="1.500"/></svg></span>
      <span class="app-i"><svg viewBox="0 0 22 22"><circle cx="11" cy="11" r="7" fill="none" stroke="#0a78d8" stroke-width="4"/><path d="M4 11h14" stroke="#0a78d8" stroke-width="3"/><path d="M14 15l6-1v4l-8 2z" fill="#0a78d8"/><rect x="14" y="12" width="8" height="3" fill="#000a0f"/></svg></span>
      <span class="app-i"><svg viewBox="0 0 22 22"><circle cx="11" cy="12" r="7" fill="none" stroke="#2a90e0" stroke-width="3"/><path d="M4 12h14" stroke="#2a90e0" stroke-width="3"/><path d="M2 20C4 12 12 2 20 2c2 4-3 10-4 11" fill="none" stroke="#e8c030" stroke-width="1.500"/></svg></span>
      <span class="app-i"><svg viewBox="0 0 22 22"><path d="M1 4h7l2 2h11v14H1z" fill="#f0c84a"/><path d="M1 9h20v11H1z" fill="#f8dc84"/><path d="M7 14h8v6H7z" fill="#2a90d8"/></svg></span>
      <span class="app-i u"><svg viewBox="0 0 22 22"><path d="M17 2c-7-1-13 4-12 11 0 6 7 8 10 5-4 0-6-2-6-5 2 1 6 1 8-2l-4-1c2-1 4-4 4-8z" fill="#1a8af0"/></svg></span>
      <span class="app-i u"><svg viewBox="0 0 22 22"><ellipse cx="11" cy="12" rx="9" ry="10" fill="#8ac83a" stroke="#dfe"/><circle cx="11" cy="12" r="5" fill="none" stroke="#fff" stroke-width="2"/><path d="M6 12h10" stroke="#fff" stroke-width="2"/></svg></span>
      <span class="app-i u act-app"><svg viewBox="0 0 24 24"><rect width="24" height="24" rx="4" fill="#0a8cf0"/><path d="M12 5v14M7 9v4h10V9M9 5h6" fill="none" stroke="#fff" stroke-width="2"/></svg></span>
      <span class="app-i u"><svg viewBox="0 0 24 24"><rect width="24" height="24" rx="2" fill="#e8901a"/><path d="M5 6h13v15H5z" fill="#f6e6b4"/><path d="M7 10h8M7 13h8M7 16h8" stroke="#a88"/><path d="M22 2L12 16l-1 3 3-1L24 5z" fill="#f0c020"/></svg></span>
      <span class="app-i u"><svg viewBox="0 0 24 24"><rect width="24" height="24" rx="3" fill="#0a60c0"/><path d="M3 8c3-1 7-1 9 1 2-2 6-2 9-1v11c-3-1-7-1-9 1-2-2-6-2-9-1z" fill="#dff"/><circle cx="14" cy="7" r="3" fill="none" stroke="#fff"/></svg></span>
    </div>
    <div class="tray">
      <span class="linktx">链接</span>
      <svg class="ts" viewBox="0 0 14 14"><path d="M1 10l6-6 6 6" fill="none" stroke="#eee" stroke-width="1.300"/></svg>
      <svg class="ts" viewBox="0 0 16 14"><rect x="3" y="4" width="12" height="8" fill="#ddd"/><path d="M3 0v4M7 0v4M1 4h8" stroke="#fff"/></svg>
      <svg class="ts" viewBox="0 0 16 14"><path d="M1 13a12 12 0 0 1 12-12M4 13a9 9 0 0 1 9-9M7 13a6 6 0 0 1 6-6" fill="none" stroke="#ddd"/></svg>
      <svg class="ts" viewBox="0 0 16 14"><path d="M1 5h3l4-4v12l-4-4H1z" fill="none" stroke="#eee"/><path d="M11 3c2 2 2 6 0 8M13 1c3 3 3 9 0 12" fill="none" stroke="#eee"/></svg>
      <svg class="kb" viewBox="0 0 24 16"><rect x=".5" y=".5" width="23" height="15" fill="none" stroke="#eee"/><path d="M3 4h18M3 7h18M6 11h12" stroke="#eee" stroke-dasharray="1 1"/></svg>
      <span class="imeA">A</span>
      <svg class="ss" viewBox="0 0 16 18"><path d="M1 3l13-2 1 14-13 2z" fill="#f04a18"/><path d="M11 5H5v4h6v3H5" fill="none" stroke="#fff" stroke-width="2"/></svg>
      <div class="clock"><span>17:35</span><span>2018/4/18</span></div>
      <span class="notif"><svg viewBox="0 0 16 16"><path d="M0 1h16v11H5l-3 3v-3H0z" fill="#f4f4f4"/><path d="M3 4h10M3 7h10" stroke="#333"/></svg><b>1</b></span>
    </div>
  </nav>

  <div class="badge"><span>72</span></div>
  <div class="sogou">
    <svg class="s-logo" viewBox="0 0 28 28"><path d="M2 6l22-5 3 19-21 7z" fill="#f0501a"/><path d="M20 8H8l-1 5h13l-1 6H6" fill="none" stroke="#fff" stroke-width="3.500"/></svg>
    <div class="s-box">
      <span class="s-a">A</span>
      <svg viewBox="0 0 16 16"><circle cx="4" cy="5" r="1.700" fill="#1a6fc0"/><path d="M11 7c2 0 2 3-1 5" fill="none" stroke="#1a6fc0" stroke-width="1.500"/></svg>
      <svg viewBox="0 0 16 16"><circle cx="8" cy="8" r="7" fill="none" stroke="#1a6fc0" stroke-width="1.500"/><circle cx="5.500" cy="6" r="1" fill="#1a6fc0"/><circle cx="10.500" cy="6" r="1" fill="#1a6fc0"/><path d="M4 9c2 4 6 4 8 0" fill="none" stroke="#1a6fc0" stroke-width="1.300"/></svg>
      <svg viewBox="0 0 16 16"><rect x="5" y="0" width="6" height="10" rx="3" fill="#1a6fc0"/><path d="M3 7c0 6 10 6 10 0M8 12v3M4 15.500h8" fill="none" stroke="#1a6fc0" stroke-width="1.200"/></svg>
      <svg viewBox="0 0 16 16"><rect x="0" y="2" width="16" height="12" rx="2" fill="#1a6fc0"/><path d="M2 5h12M2 8h12M4 11h8" stroke="#fff" stroke-dasharray="1 1"/></svg>
      <svg viewBox="0 0 16 16"><circle cx="6" cy="4" r="3" fill="#aab8c4"/><path d="M1 14c0-6 9-6 9 0z" fill="#aab8c4"/><rect x="7" y="9" width="9" height="6" fill="#fff" stroke="#aab8c4"/></svg>
      <svg viewBox="0 0 16 16"><path d="M1 3l4-2c1 2 5 2 6 0l4 2-1 4-2-1v9H4V6L2 7z" fill="#1a6fc0"/></svg>
      <svg viewBox="0 0 16 16"><path d="M2 14c-1-2 4-5 6-7-1-3 2-6 6-5l-3 3 1 2 2 0 2-2c0 4-3 6-6 5-2 2-5 7-8 4z" fill="#1a6fc0"/></svg>
    </div>
  </div>
</div>
</body>
</html>
```
FILE: styles.css
```css
* { box-sizing: border-box; }
html, body { margin: 0; padding: 0; }
body { width: 1366px; height: 768px; overflow: hidden; background: #f0f0f0; color: #1a1a1a; font: 12px/16px "Noto Sans CJK SC", "Noto Sans", sans-serif; }
.defs { display: none; }
.app { position: relative; width: 1366px; height: 768px; display: flex; flex-direction: column; overflow: hidden; }

/* title */
.titlebar { height: 23px; background: #fff; display: flex; align-items: center; padding-left: 2px; }
.appico { width: 16px; height: 16px; margin-right: 5px; flex: none; }
.title { font-family: "Open Sans", "Noto Sans CJK SC", sans-serif; font-size: 12px; white-space: nowrap; width: 690px; overflow: hidden; letter-spacing: .33px; }
.winctl { margin-left: auto; display: flex; gap: 34px; padding-right: 19px; }
.winctl svg { width: 12px; height: 12px; }

.infobar { height: 31px; display: flex; justify-content: flex-end; gap: 2px; }
.askbox { width: 187px; height: 30px; background: linear-gradient(#fafafa, #f1f1f1); color: #3c6a00; padding: 7px 0 0 29px; border-radius: 3px 3px 0 0; }
.userbox { width: 240px; height: 30px; background: linear-gradient(#fafafa, #f1f1f1); display: flex; align-items: center; padding-left: 4px; }
.phone { font-size: 12.500px; font-family: "Open Sans", sans-serif; margin-left: 4px; letter-spacing: -.2px; }
.caret { display: inline-block; width: 0; height: 0; border: 3px solid transparent; border-top: 3.500px solid #111; border-bottom: 0; flex: none; }
.c-phone { margin: 0 9px 0 7px; }
.bell { margin-left: 9px; }
.userbox .more { margin: 2px 4px 0 auto; }

.row { display: flex; }
.row-main { height: 30px; gap: 3px; padding-left: 2px; }
.bar { background: linear-gradient(#fdfdfd 30%, #f1f1f1); border-radius: 3px; display: flex; align-items: center; height: 26px; flex: none; }
.i { width: 16px; height: 16px; flex: none; display: inline-block; }
.t { display: inline-flex; align-items: center; gap: 4px; height: 22px; white-space: nowrap; color: #222; flex: none; }
.t.off { color: #9a9a9a; }
.t.tight { gap: 2px; }
.sep { width: 1px; height: 18px; background: #c4c4c4; flex: none; margin: 0 -1px; }
.more { font-size: 11px; font-weight: 700; line-height: 10px; align-self: flex-start; margin-top: 2px; font-family: "Liberation Sans", sans-serif; flex: none; }
.b-file { width: 148px; padding-left: 4px; gap: 0; }
.b-file .i:nth-child(1) { margin-right: 7px; }
.b-file .caret { margin: 0 8px 0 5px; }
.b-file .sep { margin: 0 10px 0 0; }
.b-file .more { margin-left: 14px; }
.b-cmd { width: 545px; padding-left: 4px; gap: 7px; }
.b-cmd .more { margin-left: 35px; }
.sigma { font-weight: 700; font-size: 13px; text-align: center; line-height: 16px; }
.b-view { padding-left: 2px; gap: 6.500px; width: 663px; }
.b-view > * { flex: none; }
.combo3d { display: flex; align-items: center; width: 62px; height: 26px; background: #fff; margin-right: -3px; padding-left: 3px; }
.tx3d { margin-left: 2px; white-space: nowrap; flex: none; }
.cbtn { margin-left: 4px; width: 11px; height: 22px; background: #f2f2f2; display: flex; align-items: center; justify-content: center; flex: none; }
.cw { margin: 0 3px 0 -1px; width: 6px; }
.cn { margin: 0 -2px 0 -3px; }
.b-view .more { margin-left: 28px; }

/* left panel */
.body { height: 624px; display: flex; }
.left { width: 165px; flex: none; display: flex; flex-direction: column; }
.navhead { height: 16px; border: 1px solid #9a9a9a; background: #f4f4f4; display: flex; justify-content: space-between; align-items: center; font-size: 12.500px; line-height: 14px; color: #111; }
.navctl { display: flex; gap: 9px; padding-right: 3px; }
.navctl svg { width: 9px; height: 9px; }
.navbtn { display: block; width: 165px; height: 22px; border: 1px solid #b0b0b0; background: #f4f4f4; font: 12px/16px "Noto Sans CJK SC", sans-serif; color: #222; padding: 2px 0 0; flex: none; }
.navbtn.b1 { margin-top: 3px; }
.treepanel { height: 513px; display: flex; flex-direction: column; border: 1px solid #b8b8b8; background: #fff; flex: none; width: 165px; }
.treetools { height: 28px; padding: 7px 0 0 6px; display: flex; gap: 7px; flex: none; }
.treetools svg { width: 16px; height: 14px; }
.treewrap { position: relative; flex: 1; overflow: hidden; display: flex; }
.tree { width: 145px; height: 484px; overflow: hidden; font-size: 12px; line-height: 16px; background: repeating-linear-gradient(#777 0 1px, transparent 1px 3px) 14px 0 / 1px 100% no-repeat; flex: none; }
.tree i { font: normal 10px "Liberation Mono", monospace; }
.fold, .leaf { height: 16px; display: flex; align-items: center; white-space: nowrap; }
.fold { padding-left: 9px; }
.chev { width: 8px; height: 8px; flex: none; border: solid #444; border-width: 0 1.500px 1.500px 0; transform: rotate(45deg) scale(.8); margin-top: -4px; background: #fff; }
.chev.shut { transform: rotate(-45deg) scale(.8); border-color: #aaa; margin-top: 0; }
.dash { width: 8px; margin-left: 1px; border-top: 1px dotted #777; }
.fi { width: 17px; height: 14px; margin-right: 4px; flex: none; }
.hint2 { width: 13px; height: 13px; margin-left: 24px; flex: none; }
.hint2 + .hint2 { margin-left: 0; }
.kids { padding-left: 33px; background: repeating-linear-gradient(#777 0 1px, transparent 1px 3px) 33px 0 / 1px calc(100% - 8px) no-repeat; }
.d2 { width: 11px; flex: none; border-top: 1px dotted #777; }
.ti { width: 15px; height: 15px; margin-right: 5px; flex: none; }
.leaf.cur { background: linear-gradient(90deg, transparent 10px, #d9d9d9 10px); }
.hint { width: 13px; height: 13px; margin-left: auto; flex: none; }
.cursor { position: absolute; left: 50px; top: 465px; width: 12px; height: 18px; }
.vscroll { width: 16px; height: 484px; background: #f0f0f0; display: flex; flex-direction: column; align-items: center; flex: none; }
.va { width: 10px; height: 6px; margin-top: 6px; flex: none; }
.vthumb { width: 16px; height: 297px; background: #cdcdcd; margin-top: 153px; flex: none; }
.vb { width: 10px; height: 6px; margin-top: 11px; flex: none; }

/* right */
.right { width: 1201px; flex: none; display: flex; flex-direction: column; }
.r1 { height: 26px; padding-left: 6px; }
.r2 { height: 29px; padding: 1px 0 0 6px; }
.r3 { height: 29px; padding: 1px 0 0 6px; }
.dots { width: 3px; height: 16px; flex: none; background: repeating-linear-gradient(#b0b0b0 0 2px, transparent 2px 4px); }
.b-edit { width: 790px; gap: 7px; padding-left: 3px; }
.b-edit .dots { margin-right: -3px; }
.b-edit .sep { margin: 0 -1px; }
.b-edit .pull { margin-left: -1px; }
.on { border: 1px solid #0a78d0; background: #dcecf8; padding: 0 3px; height: 24px; }
.b-sel { width: 566px; padding-left: 3px; gap: 2px; }
.b-sel .t { margin-left: 2px; }
.b-sel .sep { margin: 0 1px 0 3px; }
.b-sel .t.on { margin-left: 1px; }
.b-sel .t.pick { margin-left: 6px; }
.combo { display: flex; align-items: center; justify-content: space-between; height: 22px; background: #fff; padding: 0 4px 0 2px; flex: none; }
.combo .caret { margin-right: 0; }
.w57 { width: 57px; }
.w70 { width: 70px; }
.w67 { width: 67px; margin-left: 1px; }
.w69 { width: 69px; margin-left: 3px; }
.b-axis { margin-left: 74px; width: 421px; padding-left: 3px; gap: 7px; }
.b-axis .dots { margin-right: -3px; }
.b-axis .caret.cw { margin: 0 -1px 0 0; }
.b-draw { width: 487px; gap: 7px; padding-left: 3px; }
.sel { margin-left: -6px; width: 51px; gap: 8px; padding-left: 5px; background: linear-gradient(#e8f2fa, #d4e6f6); }
.i.sm { width: 10px; margin-right: -1px; }
.cs { margin: 0 -2px 0 -4px; }
.b-draw .blank { margin: 0 -2px 0 -5px; justify-content: flex-end; }
.b-stub { margin-left: 600px; width: 30px; padding-left: 3px; background: #f8f8f8; }
.stubbox { flex: 1; height: 24px; margin-left: 4px; background: linear-gradient(90deg, #f2f2f2, #fff); }

.canvas { height: 305px; margin-left: 5px; background: #000; flex: none; }
.scene { display: block; width: 1196px; height: 305px; shape-rendering: crispEdges; }
.axislabel { font: 11px "Liberation Sans", sans-serif; }
.triad { font: 12px "Liberation Sans", sans-serif; }

.r4 { height: 32px; padding: 2px 0 0 7px; }
.b-snap { width: 210px; gap: 4px; padding-left: 4px; }
.b-snap .t:first-of-type { margin-left: -2px; }
.b-snap .on { padding: 0 3px; }
.b-snap .dynt { margin-left: -1px; }
.b-pts { width: 265px; gap: 4px; margin-left: 1px; padding-left: 3px; }
.b-pts .t.first { margin-left: -1px; }
.b-pts .t.vt { margin-left: -1px; }
.b-pts .t.ct { margin-left: 2px; }
.pair { display: flex; }
.pair .t { margin: 0; padding: 0 3px; width: 51px; }
.b-off { width: 410px; margin-left: -1px; gap: 2px; padding-left: 3px; }
.lab { color: #777; flex: none; }
.lab.x { margin-right: 3px; }
.lab.y { margin: 0 3px; }
.spin { display: flex; align-items: center; justify-content: flex-end; height: 23px; border: 1px solid #8a8a8a; background: #f6f6f6; color: #888; flex: none; }
.v { margin-right: 4px; }
.w58 { width: 58px; }
.arrows { width: 11px; height: 16px; margin-right: 1px; position: relative; }
.arrows::before, .arrows::after { content: ""; position: absolute; left: 2px; border: 3px solid transparent; }
.arrows::before { top: 0; border-bottom: 4px solid #555; border-top: 0; }
.arrows::after { bottom: 0; border-top: 4px solid #555; border-bottom: 0; }
.chk { width: 11px; height: 11px; border: 1px solid #888; background: #fff; margin: 0 8px 0 0; flex: none; }
.rotlab { margin-right: 2px; flex: none; }
.b-off .sep { margin: 0 1px; }
.b-off .s-chk { margin: 0; }
.b-off .spin.w67 { margin-left: 0; }

.lower { display: flex; flex: 1; margin-left: 5px; }
.strip { width: 13px; flex: none; padding-top: 3px; background: radial-gradient(circle, #c4c4c4 1px, transparent 1.100px) 0 0 / 4px 4px; }
.strip svg { display: block; width: 12px; height: 12px; }
.gridcol { width: 1183px; flex: none; display: flex; flex-direction: column; }
.gridcol::after { content: ""; height: 2px; margin-top: 2px; background: #b8b8b8; flex: none; }
.r5 { height: 28px; flex: none; }
.b-rows { width: 820px; padding-left: 4px; gap: 7px; height: 27px; }
.b-rows svg.n2 { margin-left: 1px; }
.b-rows .sep { margin: 0 -1px; }
.b-rows .close { margin-left: 0; }
.grid { height: 155px; background: #fff; border-top: 1px solid #bbb; overflow: hidden; flex: none; }
.g-row { display: grid; grid-template-columns: 33px 73px 57px 36px 33px 201px 166px 156px 61px 38px 39px 49px 61px 61px 72px 47px; }
.g-row > div { border-right: 1px solid #c8c8c8; text-align: center; white-space: nowrap; overflow: hidden; }
.g-row i { font: normal 9px "Liberation Mono", monospace; }
.g-head { height: 20px; background: linear-gradient(#fff, #ececec); border-bottom: 2px solid #bcbcbc; line-height: 19px; }
.g-head .act { background: linear-gradient(#fce4b0, #f2bd68); color: #54106e; }
.g-head .cut { text-align: left; padding-left: 11px; border-right: 0; }
.g-body { height: 19px; border-bottom: 1px solid #c0c0c0; }
.g-body > div { height: 19px; }
.rh { background: #ffd68a; color: #54106e; font: 11px/18px "Liberation Mono", monospace; }
.cell { background: #d6e8f8; border-left: 2px solid #111; }
.hscroll { height: 15px; display: flex; background: #f0f0f0; flex: none; }
.hbox { width: 18px; background: #f4f4f4; }
.hthumb { width: 823px; background: #cdcdcd; }

/* status */
.status { height: 20px; display: flex; gap: 2px; background: #f0f0f0; flex: none; }
.st { height: 19px; background: #fafafa; border: 1px solid #e2e2e2; line-height: 17px; white-space: nowrap; padding-left: 1px; flex: none; }
.st i { font: normal 10px "Liberation Mono", monospace; }
.s1 { width: 148px; }
.s2 { width: 78px; }
.s3 { width: 97px; }
.s4 { width: 49px; }
.s5 { width: 915px; }
.s6 { width: 69px; }

/* taskbar */
.taskbar { height: 40px; background: #000a0f; display: flex; align-items: center; flex: none; }
.start { width: 48px; height: 40px; background: #000; display: flex; align-items: center; justify-content: center; flex: none; }
.start svg { width: 16px; height: 16px; }
.search { width: 344px; height: 40px; background: #333; display: flex; align-items: center; padding-left: 9px; flex: none; }
.cortana { width: 21px; height: 21px; margin-right: 6px; }
.ph { font-size: 14px; color: #8c8c8c; }
.mic { width: 12px; height: 20px; margin-left: auto; margin-right: 15px; }
.tv { width: 22px; height: 16px; margin-left: 13px; flex: none; }
.apps { display: flex; margin-left: 14px; height: 40px; flex: none; }
.app-i { width: 49px; height: 40px; display: flex; align-items: center; justify-content: center; flex: none; }
.app-i:nth-child(2), .app-i:nth-child(3), .app-i:nth-child(6) { margin-left: 2px; }
.app-i:nth-child(4) { margin-left: 5px; }
.app-i:nth-child(5) { margin-left: -3px; }
.app-i svg { width: 24px; height: 24px; }
.app-i.u { background: linear-gradient(#64aef2, #64aef2) bottom center / 40px 2px no-repeat; }
.app-i.act-app { background: linear-gradient(#64aef2, #64aef2) bottom center / 48px 2px no-repeat, #333d42; }
.tray { display: flex; align-items: center; flex: 1; height: 40px; margin-left: 38px; color: #eee; }
.linktx { margin-right: 9px; color: #ccc; }
.ts { width: 15px; height: 14px; margin-right: 9px; flex: none; }
.kb { width: 24px; height: 16px; margin: 0 8px 0 0; flex: none; }
.imeA { font: 19px "Liberation Sans", sans-serif; margin-right: 14px; }
.ss { width: 16px; height: 18px; flex: none; }
.clock { display: flex; flex-direction: column; align-items: flex-end; margin-left: 9px; width: 70px; font: 12.500px/19px "Open Sans", sans-serif; color: #eee; flex: none; }
.clock span:first-child { padding-right: 14px; }
.notif { position: relative; margin-left: 13px; width: 18px; height: 18px; }
.notif svg { width: 16px; height: 16px; display: block; }
.notif b { position: absolute; left: 6px; top: 6px; width: 17px; height: 17px; border-radius: 50%; background: #3a3a3a; border: 1px solid #666; color: #fff; font: 700 11px/15px "Liberation Sans", sans-serif; text-align: center; }

/* overlays */
.badge { position: absolute; left: 1076px; top: -29px; width: 48px; height: 48px; border-radius: 50%; background: #3cb85c; border: 2px solid #c4c4c4; box-shadow: 0 1px 3px rgba(0,0,0,.35); color: #fff; font: 700 11px/12px "Open Sans", sans-serif; text-align: center; padding-top: 29px; }
.sogou { position: absolute; left: 702px; top: 1px; display: flex; align-items: center; }
.s-logo { width: 30px; height: 27px; position: relative; z-index: 1; flex: none; }
.s-box { width: 183px; height: 23px; margin-left: -7px; background: #fff; border: 1px solid #c4d0dc; display: flex; align-items: center; padding-left: 14px; gap: 6.500px; color: #1a6fc0; flex: none; }
.s-box svg { width: 15px; height: 15px; flex: none; }
.s-a { font: 17px/20px "Liberation Sans", sans-serif; color: #1a6fc0; width: 14px; }
```
